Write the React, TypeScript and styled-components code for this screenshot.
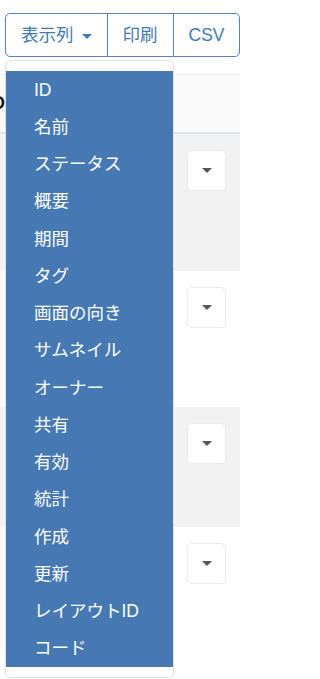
import styled, { createGlobalStyle } from 'styled-components';

const BLUE = '#4679b3';
const FONT = '"Liberation Sans", "Noto Sans CJK JP", Arial, sans-serif';

const COLUMNS = [
  'ID', '名前', 'ステータス', '概要', '期間', 'タグ', '画面の向き', 'サムネイル',
  'オーナー', '共有', '有効', '統計', '作成', '更新', 'レイアウトID', 'コード',
];

const ROWS = [
  { height: 137, striped: true },
  { height: 136, striped: false },
  { height: 120, striped: true },
  { height: 160, striped: false },
];

const GlobalStyle = createGlobalStyle`
  html, body {
    margin: 0;
    padding: 0;
    background: #fff;
    overflow: hidden;
  }
  body {
    font-family: ${FONT};
    color: #212529;
  }
`;

export default function App() {
  return (
    <>
      <GlobalStyle />
      <Page>
        <Toolbar>
          <ButtonGroup>
            <GroupButton $first>
              表示列<Caret />
            </GroupButton>
            <GroupButton>印刷</GroupButton>
            <GroupButton $last>CSV</GroupButton>
          </ButtonGroup>
          <Menu>
            {COLUMNS.map((c) => (
              <MenuItem key={c}>{c}</MenuItem>
            ))}
          </Menu>
        </Toolbar>
        <TableWrap>
          <HeaderRow>
            <HeaderCell>ID</HeaderCell>
          </HeaderRow>
          {ROWS.map((r, i) => (
            <BodyRow key={i} $striped={r.striped} style={{ height: r.height }}>
              <ActionCell>
                <RowButton>
                  <RowCaret />
                </RowButton>
              </ActionCell>
            </BodyRow>
          ))}
        </TableWrap>
      </Page>
    </>
  );
}

const Page = styled.div`
  width: 253px;
  height: 679px;
  padding: 13px 13px 0 5px;
  box-sizing: border-box;
  overflow: hidden;
`;

const Toolbar = styled.div`
  position: relative;
  z-index: 2;
`;

const ButtonGroup = styled.div`
  display: flex;
  width: 235px;
  height: 44px;
`;

const GroupButton = styled.button<{ $first?: boolean; $last?: boolean }>`
  display: flex;
  align-items: center;
  justify-content: center;
  flex: ${(p) => (p.$first ? '0 0 101px' : '0 0 67px')};
  height: 44px;
  padding: 0 15px;
  margin-left: ${(p) => (p.$first ? '0' : '-1px')};
  background: #fff;
  border: 1px solid #5584bc;
  border-radius: ${(p) => (p.$first ? '5px 0 0 5px' : p.$last ? '0 5px 5px 0' : '0')};
  color: ${BLUE};
  font-family: ${FONT};
  font-size: 17.5px;
  line-height: 26px;
  white-space: nowrap;
`;

const Caret = styled.span`
  display: inline-block;
  margin-left: 8px;
  margin-top: 2px;
  border-top: 5px solid ${BLUE};
  border-left: 5px solid transparent;
  border-right: 5px solid transparent;
`;

const Menu = styled.div`
  position: absolute;
  top: 47px;
  left: 0;
  width: 169px;
  padding: 10px 0;
  background: #fff;
  border: 1px solid #e2e2e2;
  border-radius: 5px;
  box-sizing: border-box;
`;

const MenuItem = styled.div`
  background: ${BLUE};
  color: #fff;
  font-size: 17.5px;
  line-height: 26.25px;
  padding: 5.5px 28px;
  white-space: nowrap;
`;

const TableWrap = styled.div`
  margin-top: 17px;
  margin-left: -31px;
  width: 266px;
`;

const HeaderRow = styled.div`
  display: flex;
  align-items: center;
  height: 57px;
  background: #fafafa;
  border-top: 1px solid #eceeef;
  border-bottom: 2px solid #dfe3e7;
`;

const HeaderCell = styled.div`
  padding-left: 13.5px;
  font-weight: 700;
  font-size: 17.5px;
  color: #111;
`;

const BodyRow = styled.div<{ $striped: boolean }>`
  display: flex;
  justify-content: flex-end;
  background: ${(p) => (p.$striped ? '#f2f2f2' : '#fff')};
`;

const ActionCell = styled.div`
  padding: 16px 14px 0 0;
`;

const RowButton = styled.div`
  display: flex;
  align-items: center;
  justify-content: center;
  width: 39px;
  height: 41px;
  background: #fff;
  border: 1px solid #ececec;
  border-radius: 5px;
  box-sizing: border-box;
`;

const RowCaret = styled.span`
  border-top: 5px solid #555;
  border-left: 5px solid transparent;
  border-right: 5px solid transparent;
`;
